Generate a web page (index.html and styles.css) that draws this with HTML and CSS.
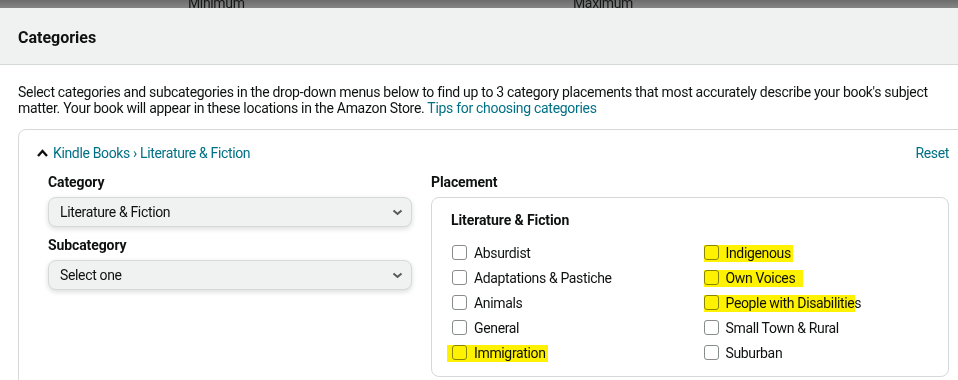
FILE: index.html
```html
<!DOCTYPE html>
<html lang="en">
<head>
    <meta charset="UTF-8">
    <meta name="viewport" content="width=device-width, initial-scale=1.0">
    <title>Categories</title>
    <link rel="stylesheet" href="styles.css">
</head>
<body>
    <div class="dim-strip">
        <span class="dim-label">Minimum</span>
        <span class="dim-label">Maximum</span>
    </div>
    <div class="modal">
        <div class="modal-head">
            <h2>Categories</h2>
        </div>
        <div class="modal-body">
            <p class="intro">Select categories and subcategories in the drop-down menus below to find up to 3 category placements that most accurately describe your book's subject matter. Your book will appear in these locations in the Amazon Store. <a href="#" class="link">Tips for choosing categories</a></p>

            <div class="cat-card">
                <div class="card-top">
                    <a href="#" class="link crumb">
                        <svg class="caret" width="11" height="8" viewBox="0 0 11 8"><path d="M1 7 L5.5 2 L10 7" fill="none" stroke="#0f1111" stroke-width="2.4"/></svg>
                        Kindle Books › Literature &amp; Fiction
                    </a>
                    <a href="#" class="link">Reset</a>
                </div>

                <div class="card-cols">
                    <div class="pickers">
                        <div class="field-label">Category</div>
                        <div class="select">
                            <span>Literature &amp; Fiction</span>
                            <svg width="11" height="7" viewBox="0 0 11 7"><path d="M1.5 1.5 L5.5 5 L9.5 1.5" fill="none" stroke="#565959" stroke-width="2"/></svg>
                        </div>
                        <div class="field-label">Subcategory</div>
                        <div class="select">
                            <span>Select one</span>
                            <svg width="11" height="7" viewBox="0 0 11 7"><path d="M1.5 1.5 L5.5 5 L9.5 1.5" fill="none" stroke="#565959" stroke-width="2"/></svg>
                        </div>
                    </div>

                    <div class="placement">
                        <div class="field-label">Placement</div>
                        <div class="place-box">
                            <div class="place-title">Literature &amp; Fiction</div>
                            <div class="checks">
                                <label class="check"><span class="box"></span>Absurdist</label>
                                <label class="check hl"><span class="box"></span>Indigenous</label>
                                <label class="check"><span class="box"></span>Adaptations &amp; Pastiche</label>
                                <label class="check hl hl-long"><span class="box"></span>Own Voices</label>
                                <label class="check"><span class="box"></span>Animals</label>
                                <label class="check hl hl-short"><span class="box"></span>People with Disabilities</label>
                                <label class="check"><span class="box"></span>General</label>
                                <label class="check"><span class="box"></span>Small Town &amp; Rural</label>
                                <label class="check hl hl-left"><span class="box"></span>Immigration</label>
                                <label class="check"><span class="box"></span>Suburban</label>
                            </div>
                        </div>
                    </div>
                </div>
            </div>
        </div>
    </div>
</body>
</html>
```

FILE: styles.css
```css
*{
    margin: 0;
    padding: 0;
    box-sizing: border-box;
}
body{
    width: 958px;
    height: 380px;
    overflow: hidden;
    background: #fff;
    color: #0f1111;
    font-family: Roboto, "Liberation Sans", Arial, sans-serif;
    font-size: 14px;
    line-height: 16px;
    letter-spacing: -0.35px;
}
.link{
    color: #007185;
    text-decoration: none;
}

/* dimmed page behind the modal */
.dim-strip{
    height: 8px;
    overflow: hidden;
    display: flex;
    padding-left: 188px;
    background: linear-gradient(#6c6c6c, #858585);
}
.dim-label{
    width: 394px;
    margin-top: -4px;
    line-height: 14px;
    color: #151616;
}

.modal{
    width: 986px;
}
.modal-head{
    height: 57px;
    display: flex;
    align-items: center;
    padding: 0 18px;
    background: #f0f2f2;
    border-bottom: 1px solid #d5d9d9;
}
.modal-head h2{
    font-size: 16px;
    font-weight: 700;
    letter-spacing: 0;
    margin-top: 3px;
}
.modal-body{
    padding: 19px 18px 0;
}
.intro{
    max-width: 930px;
    letter-spacing: -0.3px;
    margin-bottom: 13px;
}

.cat-card{
    border: 1px solid #d5d9d9;
    border-radius: 8px;
    padding: 15px 18px 24px;
}
.card-top{
    display: flex;
    justify-content: space-between;
    align-items: center;
}
.crumb{
    display: flex;
    align-items: center;
    gap: 5px;
}
.card-cols{
    display: grid;
    grid-template-columns: 364px 1fr;
    column-gap: 19px;
    margin: 13px 0 0 11px;
}
.field-label{
    font-weight: 700;
    letter-spacing: -0.1px;
    margin-bottom: 7px;
}
.select{
    height: 30px;
    display: flex;
    align-items: center;
    justify-content: space-between;
    padding: 0 8px 0 11px;
    background: #f0f2f2;
    border: 1px solid #d5d9d9;
    border-radius: 8px;
    box-shadow: 0 2px 5px rgba(15, 17, 17, .15);
    margin-bottom: 10px;
}

.place-box{
    height: 180px;
    border: 1px solid #d5d9d9;
    border-radius: 8px;
    padding: 14px 19px 0;
}
.place-title{
    font-weight: 700;
    letter-spacing: -0.1px;
    margin-bottom: 12px;
}
.checks{
    display: grid;
    grid-template-columns: 1fr 1fr;
    column-gap: 26px;
    margin-left: 1px;
}
.check{
    position: relative;
    justify-self: start;
    height: 25px;
    display: flex;
    align-items: center;
    gap: 7px;
}
.box{
    width: 15px;
    height: 15px;
    border: 1px solid #888c8c;
    border-radius: 3px;
    background: #fff;
}

/* marker-pen highlight over an option */
.hl::after{
    content: "";
    position: absolute;
    left: 0;
    right: -2px;
    top: 5px;
    bottom: 3px;
    background: #fff200;
    mix-blend-mode: multiply;
}
.hl-long::after{
    right: -8px;
}
.hl-short::after{
    right: 6px;
}
.hl-left::after{
    left: -5px;
}
```
